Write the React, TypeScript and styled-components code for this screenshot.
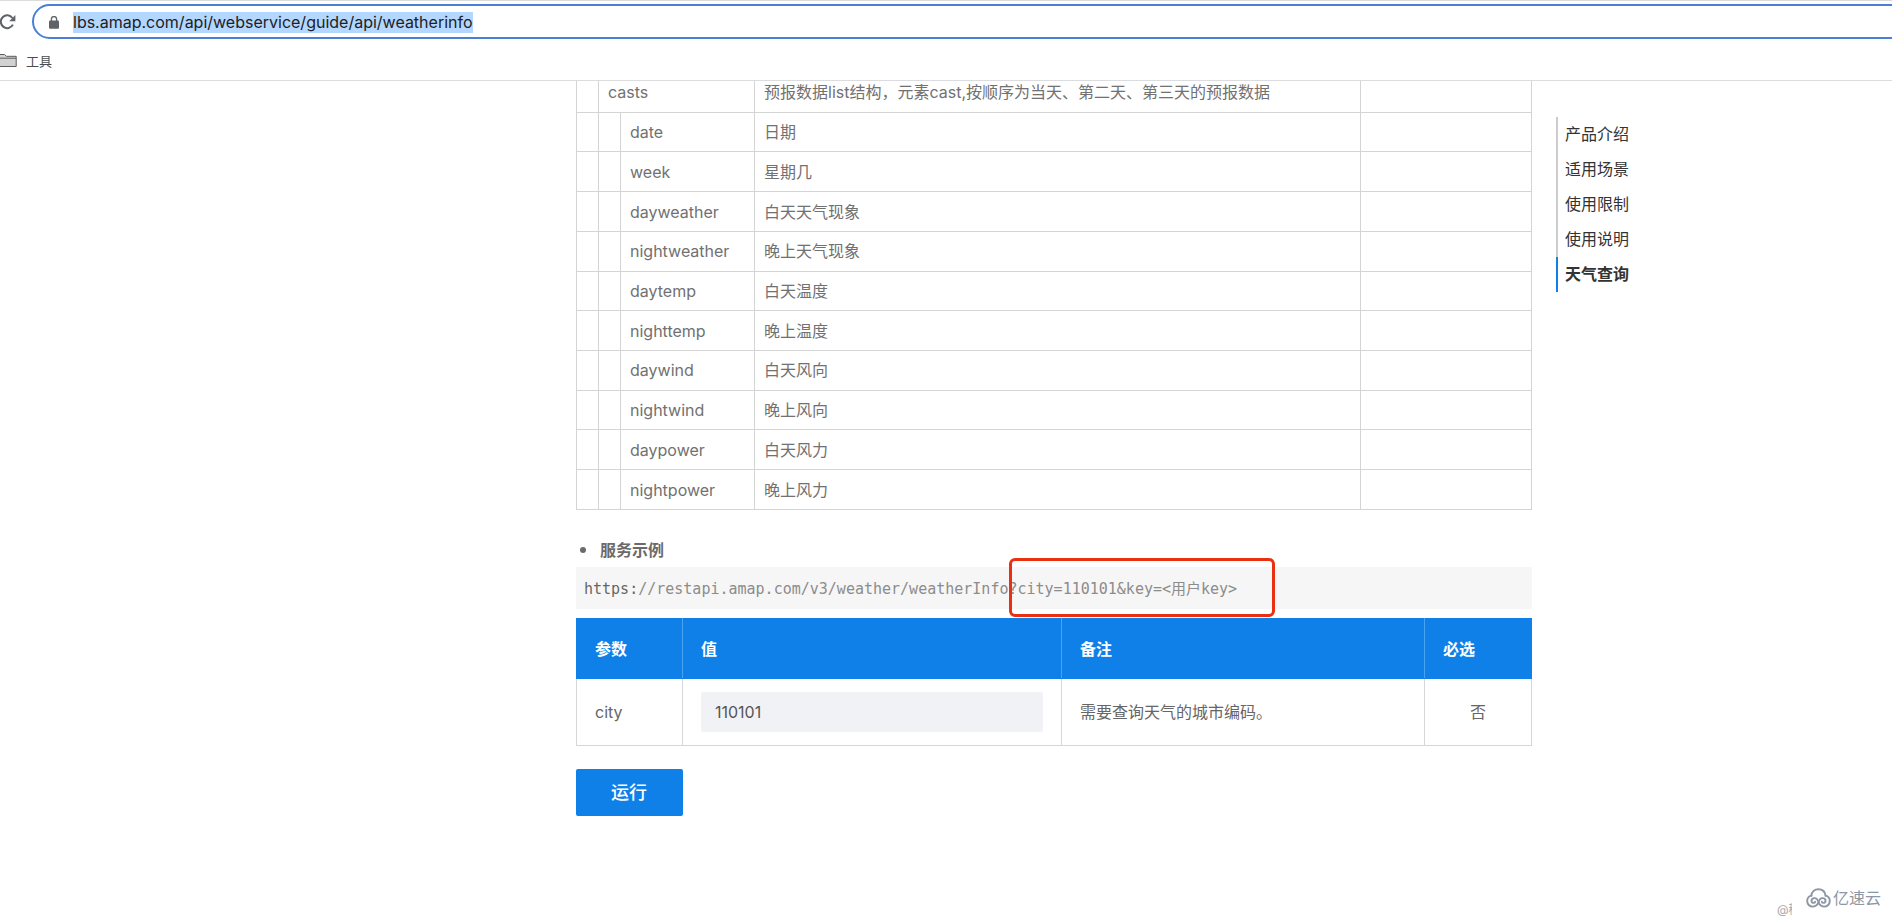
import React, { useState } from "react";
import styled, { createGlobalStyle, css } from "styled-components";

const GlobalStyle = createGlobalStyle`
  *, *::before, *::after { box-sizing: border-box; }
  body {
    margin: 0;
    background: #fff;
    color: #666;
    font: 16px/24px Inter, "Noto Sans CJK SC", sans-serif;
  }
  button, input { font: inherit; }
`;

const Page = styled.div`
  display: flex;
  flex-direction: column;
  min-height: 100vh;
  overflow: hidden;
`;

const BrowserBar = styled.header`
  border-top: 1px solid #dcdcdc;
  border-bottom: 1px solid #dadce0;
`;

const AddressRow = styled.div`
  display: flex;
  align-items: center;
  gap: 16px;
  padding-top: 3px;
`;

const ReloadButton = styled.button`
  display: flex;
  width: 16px;
  height: 16px;
  padding: 0;
  border: 0;
  background: none;
  color: #5f6368;
`;

const AddressBox = styled.div`
  display: flex;
  flex: 1;
  align-items: center;
  gap: 14px;
  height: 35px;
  margin-right: -24px;
  padding: 1px 15px 0;
  border: 2px solid #4a80d4;
  border-radius: 18px;
  color: #5f6368;
`;

const AddressLink = styled.a`
  background: #b3d7fe;
  color: #202124;
  line-height: 21px;
  text-decoration: none;
`;

const BookmarkRow = styled.nav`
  display: flex;
  align-items: center;
  height: 41px;
  padding-top: 2px;
`;

const Bookmark = styled.a`
  display: flex;
  align-items: center;
  gap: 9px;
  color: #4a4d51;
  font-size: 13px;
  text-decoration: none;
`;

const Viewport = styled.div`
  display: grid;
  flex: 1;
  grid-template-columns: minmax(0, 576fr) minmax(0, 956fr) minmax(0, 360fr);
  overflow: hidden;
`;

const Article = styled.main`
  grid-column: 2;
  margin-top: -9px;
`;

const baseTable = css`
  width: 100%;
  border-collapse: collapse;
  table-layout: fixed;
`;

const FieldTable = styled.table`
  ${baseTable}
  height: 438px;
`;

const Col = styled.col<{ $w?: string }>`
  width: ${({ $w }) => $w ?? "auto"};
`;

const FieldCell = styled.td`
  height: 39px;
  padding: 0 9px;
  border: 1px solid #d4d4d4;
  color: #717171;
`;

const ExampleTitle = styled.h4`
  display: flex;
  align-items: center;
  gap: 14px;
  margin: 28px 0 5px;
  padding-left: 4px;
  font-size: 16px;
  font-weight: 700;
  color: #6b6b6b;

  &::before {
    content: "";
    width: 6px;
    height: 6px;
    border-radius: 50%;
    background: #6b6b6b;
  }
`;

const CodeLine = styled.pre`
  position: relative;
  margin: 0 0 9px;
  padding: 10px 8px 8px;
  background: #f6f6f6;
  color: #666;
  font: 15px/24px "DejaVu Sans Mono", "Noto Sans CJK SC", monospace;
`;

const Comment = styled.span`
  color: #8c8c8c;
`;

const Query = styled.span`
  position: relative;
`;

const Highlight = styled.span`
  position: absolute;
  top: -22px;
  right: -38px;
  bottom: -19px;
  left: 1px;
  border: 3px solid #ea3012;
  border-radius: 6px;
`;

const ParamTable = styled.table`
  ${baseTable}
`;

const HeadCell = styled.th`
  height: 60px;
  padding: 0 18px;
  border: 1px solid #0e80e8;
  border-right-color: #4aa2f2;
  background: #0e80e8;
  color: #fff;
  font-weight: 700;
  text-align: left;

  &:last-child { border-right-color: #0e80e8; }
`;

const ParamCell = styled.td<{ $center?: boolean }>`
  height: 67px;
  padding: 0 18px;
  border: 1px solid #d4d6da;
  text-align: ${({ $center }) => ($center ? "center" : "left")};
`;

const ValueInput = styled.input`
  display: block;
  width: 100%;
  height: 40px;
  padding: 0 14px;
  border: 0;
  border-radius: 2px;
  background: #f1f2f5;
  color: #555;
`;

const RunButton = styled.button`
  height: 47px;
  margin-top: 23px;
  padding: 0 36px 0 35px;
  border: 0;
  border-radius: 2px;
  background: #0e80e8;
  color: #fff;
  font-size: 18px;
  font-weight: 500;
`;

const Toc = styled.nav`
  display: flex;
  flex-direction: column;
  align-self: start;
  margin: 36px 0 0 24px;
`;

const TocLink = styled.a<{ $active?: boolean }>`
  padding-left: 7px;
  border-left: 2px solid ${({ $active }) => ($active ? "#0e80e8" : "#ccc")};
  color: #333;
  font-weight: ${({ $active }) => ($active ? 700 : 400)};
  line-height: 35px;
  text-decoration: none;
`;

const Watermark = styled.footer`
  position: absolute;
  right: 11px;
  bottom: 0;
  display: flex;
  align-items: flex-end;
  gap: 14px;
  color: #8e97a6;
`;

const Handle = styled.span`
  width: 15px;
  overflow: hidden;
  color: #a8a8a8;
  font-size: 12px;
  line-height: 18px;
  white-space: nowrap;
`;

const Brand = styled.span`
  display: flex;
  align-items: center;
  gap: 2px;
  padding-bottom: 9px;
`;

const ReloadIcon = () => (
  <svg width="16" height="16" viewBox="0 0 16 16" fill="none" aria-hidden="true">
    <path d="M12.9 10.6A6.4 6.4 0 1 1 12.4 4" stroke="currentColor" strokeWidth="2" />
    <path d="M15.4 1v6.2H9.2z" fill="currentColor" />
  </svg>
);

const LockIcon = () => (
  <svg width="10" height="13" viewBox="0 0 10 13" aria-hidden="true">
    <path d="M2.4 5V3.2a2.6 2.6 0 0 1 5.2 0V5" fill="none" stroke="currentColor" strokeWidth="1.3" />
    <rect y="4.6" width="10" height="8.2" rx="1" fill="currentColor" />
  </svg>
);

const FolderIcon = () => (
  <svg width="17" height="15" viewBox="0 0 17 15" aria-hidden="true">
    <path d="M-2 13.5V1.5H4.5L6.5 3.3H16.2V13.5z" fill="#d2d2d2" stroke="#5c5c5c" />
    <path d="M-2 5.2H16" stroke="#5c5c5c" />
  </svg>
);

const CloudIcon = () => (
  <svg width="25" height="20" viewBox="0 0 25 20" fill="none" stroke="currentColor" strokeWidth="1.9" strokeLinecap="round" aria-hidden="true">
    <path d="M5.4 7.6C5.7 3.8 8.6 1.2 12.4 1.2s6.7 2.5 7.2 6.4" />
    <path d="M5.4 7.6C2.9 8.2 1.2 10.4 1.2 13c0 3.1 2.4 5.6 5.6 5.6 2.5 0 4.1-1.2 5.7-3.6" />
    <path d="M12.5 15c-.4-3.2-1.9-4.9-4.1-4.9-1.7 0-2.9 1.1-2.9 2.6 0 1.3.9 2.2 2.1 2.2.8 0 1.4-.4 1.5-1.1" />
    <path d="M19.6 7.6c2.5.6 4.2 2.8 4.2 5.4 0 3.1-2.4 5.6-5.6 5.6-2.5 0-4.1-1.2-5.7-3.6" />
    <path d="M12.5 15c.4-3.2 1.9-4.9 4.1-4.9 1.7 0 2.9 1.1 2.9 2.6 0 1.3-.9 2.2-2.1 2.2-.8 0-1.4-.4-1.5-1.1" />
  </svg>
);

const fields = [
  ["date", "日期"],
  ["week", "星期几"],
  ["dayweather", "白天天气现象"],
  ["nightweather", "晚上天气现象"],
  ["daytemp", "白天温度"],
  ["nighttemp", "晚上温度"],
  ["daywind", "白天风向"],
  ["nightwind", "晚上风向"],
  ["daypower", "白天风力"],
  ["nightpower", "晚上风力"],
];

const sections = ["产品介绍", "适用场景", "使用限制", "使用说明", "天气查询"];

export default function App() {
  const [city, setCity] = useState("110101");

  return (
    <Page lang="zh-CN">
      <GlobalStyle />
      <BrowserBar>
        <AddressRow>
          <ReloadButton type="button" aria-label="重新加载"><ReloadIcon /></ReloadButton>
          <AddressBox>
            <LockIcon />
            <AddressLink href="#weatherinfo">lbs.amap.com/api/webservice/guide/api/weatherinfo</AddressLink>
          </AddressBox>
        </AddressRow>
        <BookmarkRow>
          <Bookmark href="#tools"><FolderIcon />工具</Bookmark>
        </BookmarkRow>
      </BrowserBar>

      <Viewport>
        <Article>
          <FieldTable>
            <colgroup>
              <Col $w="22px" />
              <Col $w="22px" />
              <Col $w="134px" />
              <Col />
              <Col $w="171px" />
            </colgroup>
            <tbody>
              <tr>
                <FieldCell />
                <FieldCell colSpan={2}>casts</FieldCell>
                <FieldCell>预报数据list结构，元素cast,按顺序为当天、第二天、第三天的预报数据</FieldCell>
                <FieldCell />
              </tr>
              {fields.map(([name, meaning]) => (
                <tr key={name}>
                  <FieldCell />
                  <FieldCell />
                  <FieldCell>{name}</FieldCell>
                  <FieldCell>{meaning}</FieldCell>
                  <FieldCell />
                </tr>
              ))}
            </tbody>
          </FieldTable>

          <ExampleTitle>服务示例</ExampleTitle>
          <CodeLine>
            https:
            <Comment>
              {"//restapi.amap.com/v3/weather/weatherInfo"}
              <Query>{"?city=110101&key=<用户key>"}<Highlight /></Query>
            </Comment>
          </CodeLine>

          <ParamTable>
            <colgroup>
              <Col $w="106px" />
              <Col $w="379px" />
              <Col />
              <Col $w="107px" />
            </colgroup>
            <thead>
              <tr>
                <HeadCell>参数</HeadCell>
                <HeadCell>值</HeadCell>
                <HeadCell>备注</HeadCell>
                <HeadCell>必选</HeadCell>
              </tr>
            </thead>
            <tbody>
              <tr>
                <ParamCell><label htmlFor="city">city</label></ParamCell>
                <ParamCell>
                  <ValueInput id="city" value={city} onChange={(e) => setCity(e.target.value)} />
                </ParamCell>
                <ParamCell>需要查询天气的城市编码。</ParamCell>
                <ParamCell $center>否</ParamCell>
              </tr>
            </tbody>
          </ParamTable>

          <RunButton type="button">运行</RunButton>
        </Article>

        <Toc>
          {sections.map((name, i) => (
            <TocLink key={name} href={`#section-${i + 1}`} $active={i === sections.length - 1}>{name}</TocLink>
          ))}
        </Toc>
      </Viewport>

      <Watermark>
        <Handle>@稀</Handle>
        <Brand><CloudIcon />亿速云</Brand>
      </Watermark>
    </Page>
  );
}
